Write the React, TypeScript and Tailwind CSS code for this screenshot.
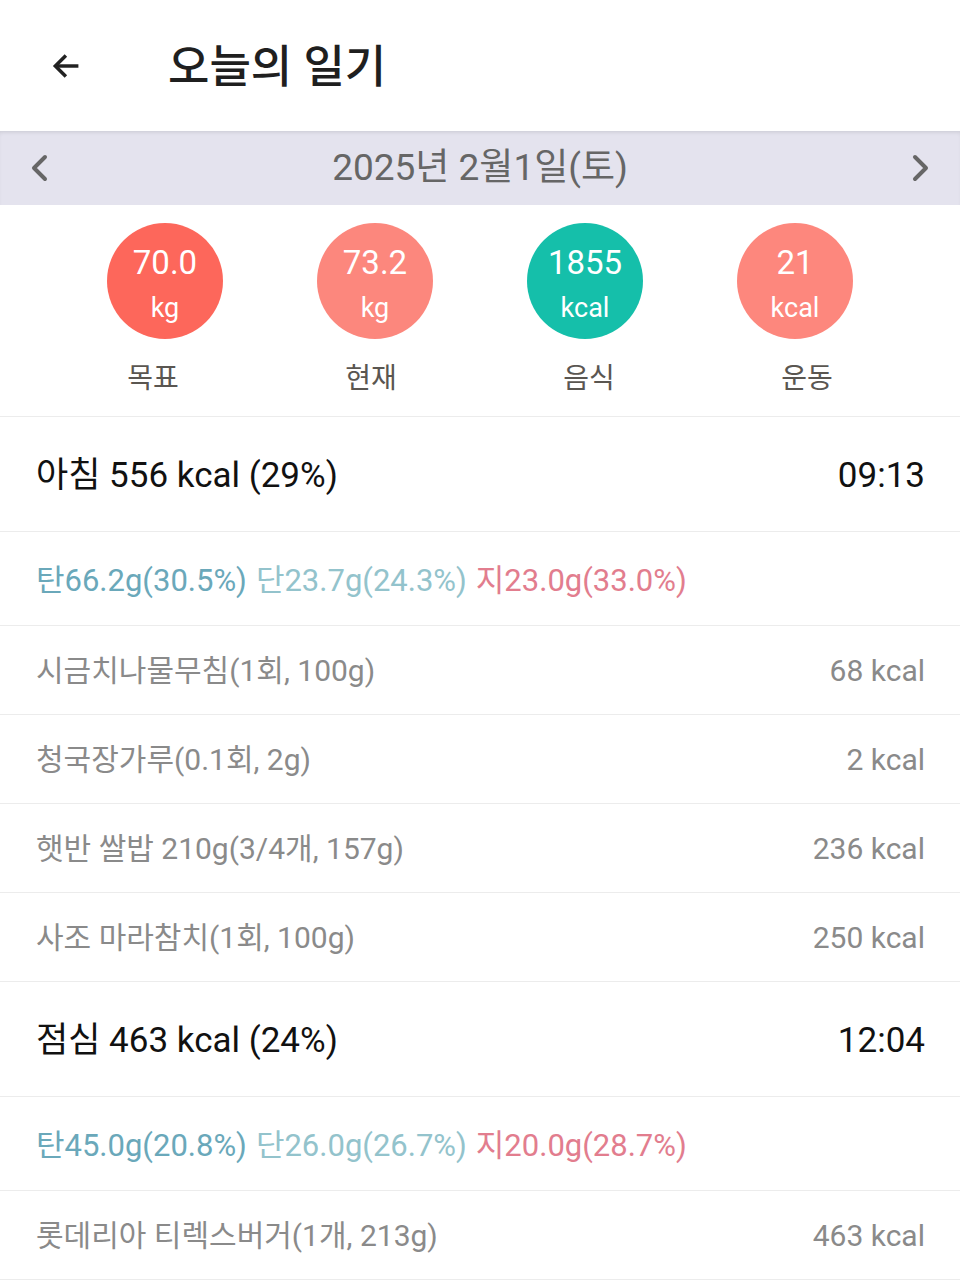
import React from 'react';

const font = { fontFamily: 'Roboto, "Noto Sans CJK KR", sans-serif' };

const stats = [
  { value: '70.0', unit: 'kg', label: '목표', color: 'bg-[#fd675b]' },
  { value: '73.2', unit: 'kg', label: '현재', color: 'bg-[#fc877d]' },
  { value: '1855', unit: 'kcal', label: '음식', color: 'bg-[#15bfaa]' },
  { value: '21', unit: 'kcal', label: '운동', color: 'bg-[#fd877d]' },
];

type Meal = {
  title: string;
  time: string;
  carb: string;
  protein: string;
  fat: string;
  foods: { name: string; kcal: string }[];
};

const meals: Meal[] = [
  {
    title: '아침 556 kcal (29%)',
    time: '09:13',
    carb: '탄66.2g(30.5%)',
    protein: '단23.7g(24.3%)',
    fat: '지23.0g(33.0%)',
    foods: [
      { name: '시금치나물무침(1회, 100g)', kcal: '68 kcal' },
      { name: '청국장가루(0.1회, 2g)', kcal: '2 kcal' },
      { name: '햇반 쌀밥 210g(3/4개, 157g)', kcal: '236 kcal' },
      { name: '사조 마라참치(1회, 100g)', kcal: '250 kcal' },
    ],
  },
  {
    title: '점심 463 kcal (24%)',
    time: '12:04',
    carb: '탄45.0g(20.8%)',
    protein: '단26.0g(26.7%)',
    fat: '지20.0g(28.7%)',
    foods: [{ name: '롯데리아 티렉스버거(1개, 213g)', kcal: '463 kcal' }],
  },
];

const MealBlock = ({ meal }: { meal: Meal }) => (
  <div>
    <div className="flex h-[115px] items-center justify-between border-b border-[#ececec] pt-[5px] pr-[35px] pl-[36px] text-[35px] text-[#111]">
      <span>{meal.title}</span>
      <span>{meal.time}</span>
    </div>
    <div className="flex h-[94px] items-center gap-[9px] border-b border-[#ececec] pt-[5px] px-[36px] text-[31px]">
      <span className="text-[#6aa8ba]">{meal.carb}</span>
      <span className="text-[#93c3cc]">{meal.protein}</span>
      <span className="text-[#e27d8e]">{meal.fat}</span>
    </div>
    {meal.foods.map((f) => (
      <div
        key={f.name}
        className="flex h-[89px] items-center justify-between border-b border-[#ececec] pr-[35px] pl-[36px] text-[30px] text-[#8a8a8a]"
      >
        <span>{f.name}</span>
        <span>{f.kcal}</span>
      </div>
    ))}
  </div>
);

export default function App() {
  return (
    <div className="min-h-screen w-[960px] bg-white" style={font}>
      {/* top bar */}
      <div className="flex h-[131px] items-center">
        <div className="flex w-[168px] items-center pl-[50px]">
          <svg width="32" height="32" viewBox="0 0 24 24" fill="none" stroke="#222" strokeWidth="2.6" strokeLinecap="square">
            <path d="M20 12H5" />
            <path d="M11 5l-7 7 7 7" />
          </svg>
        </div>
        <h1 className="pt-[4px] text-[45px] font-medium text-[#1f1f1f]">오늘의 일기</h1>
      </div>

      {/* date nav */}
      <div className="flex h-[74px] items-center justify-between bg-[#e4e3ee] px-[28px] shadow-[inset_0_3px_4px_-2px_rgba(0,0,0,0.12)]">
        <svg width="22" height="32" viewBox="0 0 22 32" fill="none" stroke="#666" strokeWidth="4" strokeLinecap="round" strokeLinejoin="round">
          <path d="M17 5L6 16l11 11" />
        </svg>
        <span className="text-[37px] text-[#666]">2025년 2월1일(토)</span>
        <svg width="22" height="32" viewBox="0 0 22 32" fill="none" stroke="#666" strokeWidth="4" strokeLinecap="round" strokeLinejoin="round">
          <path d="M5 5l11 11-11 11" />
        </svg>
      </div>

      {/* summary circles */}
      <div className="border-b border-[#ececec] pt-[18px] pb-[17px]">
        <div className="flex justify-center">
          {stats.map((s) => (
            <div key={s.label} className="flex w-[210px] justify-center">
              <div className={`flex h-[116px] w-[116px] flex-col items-center justify-center rounded-full pt-[10px] text-white ${s.color}`}>
                <span className="text-[33px] leading-[44px]">{s.value}</span>
                <span className="text-[27px] leading-[46px]">{s.unit}</span>
              </div>
            </div>
          ))}
        </div>
        <div className="mt-[20px] flex justify-center">
          {stats.map((s) => (
            <div key={s.label} className="w-[218px] text-center text-[28px] leading-[40px] text-[#5a5651]">
              {s.label}
            </div>
          ))}
        </div>
      </div>

      {meals.map((m) => (
        <MealBlock key={m.time} meal={m} />
      ))}
    </div>
  );
}
